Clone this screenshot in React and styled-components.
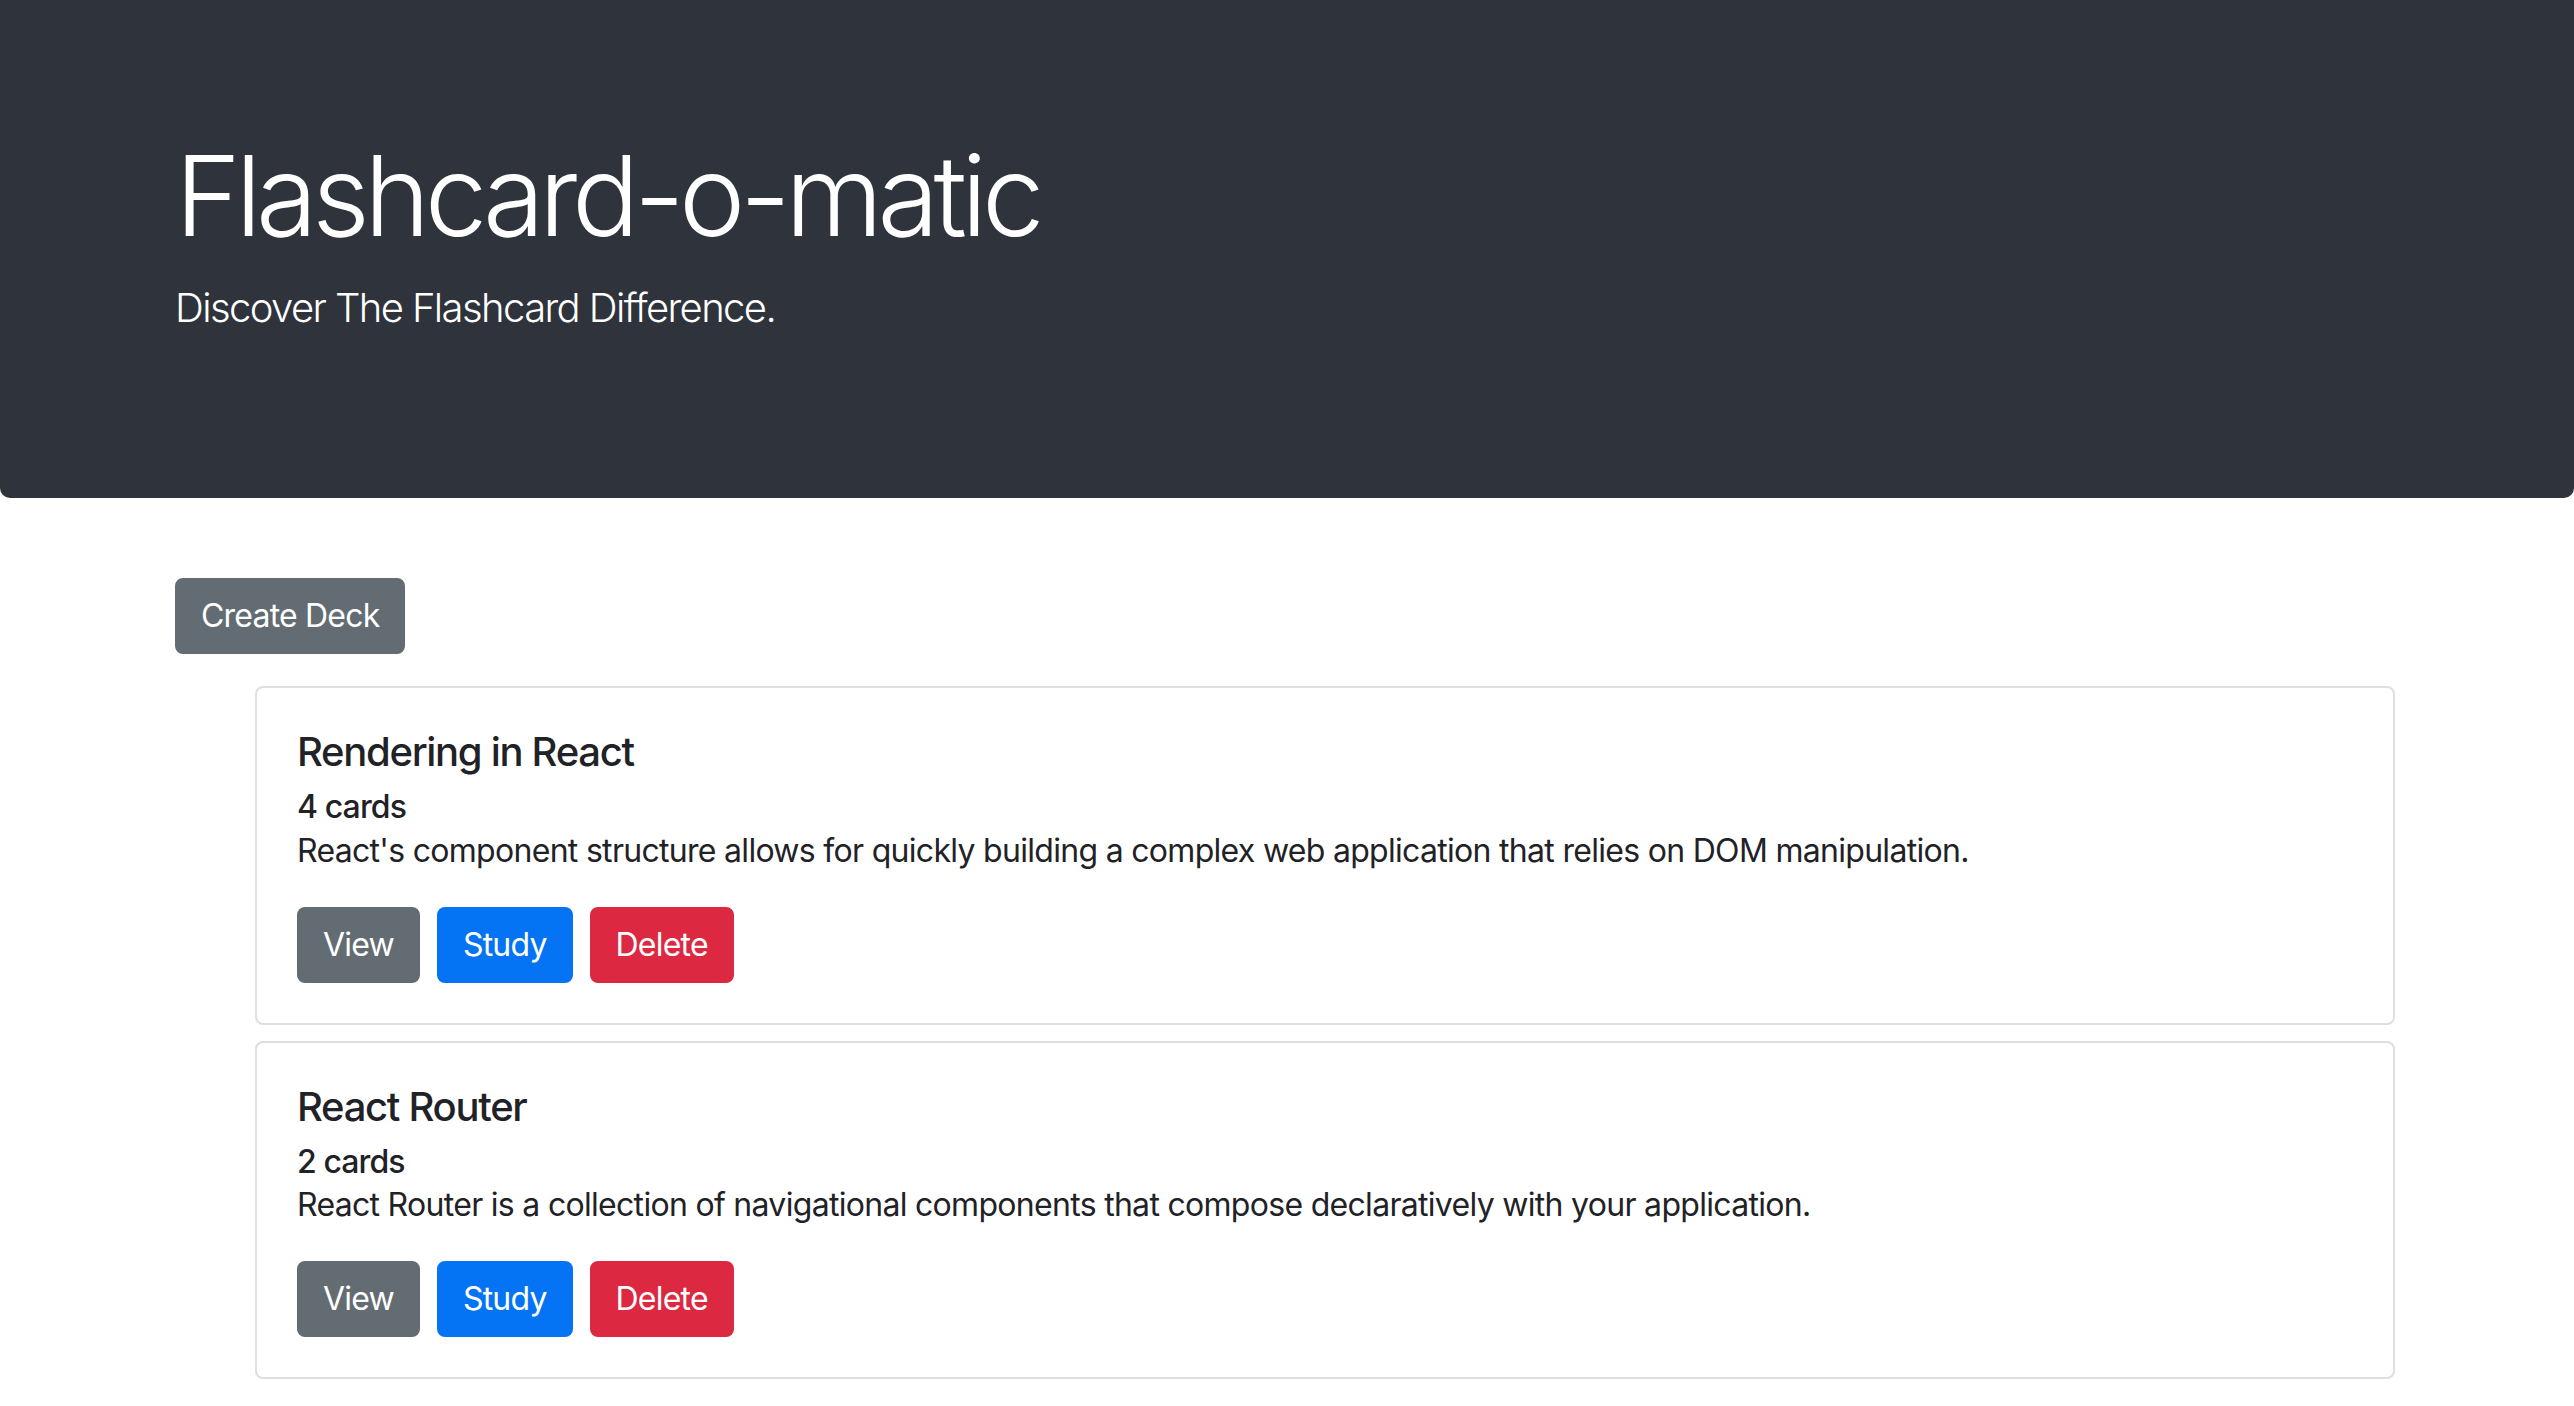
import React from 'react';
import styled, { createGlobalStyle } from 'styled-components';

const GlobalStyle = createGlobalStyle`
  * {
    box-sizing: border-box;
  }

  body {
    margin: 0;
    background: #ffffff;
    color: #1f2226;
    font-family: Inter, "Noto Sans", "Liberation Sans", sans-serif;
    font-size: 32px;
    line-height: 1.5;
    letter-spacing: -0.7px;
  }
`;

const Jumbotron = styled.header`
  background: #2f333b;
  color: #ffffff;
  padding: 128px 0;
  margin-bottom: 64px;
  border-radius: 0 0 10px 10px;
`;

const Container = styled.div`
  max-width: 2280px;
  margin: 0 auto;
  padding: 0 28px;
`;

const Title = styled.h1`
  margin: 0 0 16px;
  font-size: 112px;
  font-weight: 300;
  line-height: 1.2;
  letter-spacing: -5.5px;
`;

const Lead = styled.p`
  margin: 0 0 32px;
  font-size: 40px;
  font-weight: 300;
  line-height: 1.5;
  letter-spacing: -1.6px;
`;

const Toolbar = styled.div`
  padding-top: 16px;
`;

const Button = styled.button`
  display: inline-block;
  padding: 12px 24px;
  border: 2px solid ${(p) => p.$bg};
  border-radius: 8px;
  background: ${(p) => p.$bg};
  color: #ffffff;
  font-family: inherit;
  font-size: 32px;
  font-weight: 400;
  line-height: 1.5;
  letter-spacing: -0.8px;
  cursor: pointer;
`;

const DeckList = styled.ul`
  list-style: none;
  margin: 32px 0 0;
  padding: 0 4px 0 80px;
  display: flex;
  flex-direction: column;
  gap: 16px;
`;

const Card = styled.li`
  border: 2px solid #dfdfdf;
  border-radius: 8px;
  background: #ffffff;
  padding: 40px;
`;

const CardTitle = styled.h5`
  margin: 0 0 24px;
  font-size: 40px;
  font-weight: 500;
  line-height: 1.2;
  letter-spacing: -1.3px;
`;

const CardCount = styled.h6`
  margin: -12px 0 0;
  font-size: 32px;
  font-weight: 500;
  line-height: 1.2;
  letter-spacing: -0.9px;
`;

const CardText = styled.p`
  margin: 0 0 32px;
  font-size: 32px;
  line-height: 1.5;
`;

const Actions = styled.div`
  display: flex;
  gap: 17px;
`;

const GREY = '#626c72';
const BLUE = '#0473f4';
const RED = '#dc2840';

const decks = [
  {
    id: 1,
    name: 'Rendering in React',
    cards: 4,
    description:
      "React's component structure allows for quickly building a complex web application that relies on DOM manipulation.",
  },
  {
    id: 2,
    name: 'React Router',
    cards: 2,
    description:
      'React Router is a collection of navigational components that compose declaratively with your application.',
  },
];

const App = () => {
  return (
    <>
      <GlobalStyle />
      <Jumbotron>
        <Container>
          <Title>Flashcard-o-matic</Title>
          <Lead>Discover The Flashcard Difference.</Lead>
        </Container>
      </Jumbotron>
      <Container>
        <Toolbar>
          <Button $bg={GREY}>Create Deck</Button>
        </Toolbar>
        <DeckList>
          {decks.map((deck) => (
            <Card key={deck.id}>
              <CardTitle>{deck.name}</CardTitle>
              <CardCount>{deck.cards} cards</CardCount>
              <CardText>{deck.description}</CardText>
              <Actions>
                <Button $bg={GREY}>View</Button>
                <Button $bg={BLUE}>Study</Button>
                <Button $bg={RED}>Delete</Button>
              </Actions>
            </Card>
          ))}
        </DeckList>
      </Container>
    </>
  );
};

export default App;
